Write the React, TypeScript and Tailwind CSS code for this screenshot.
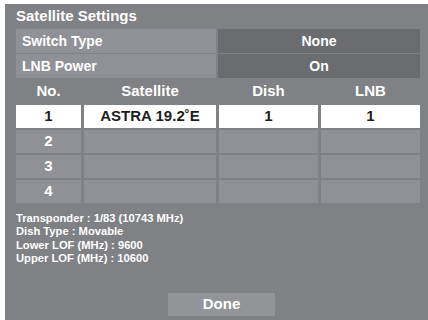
const rows = [
  { no: "1", sat: "ASTRA 19.2˚E", dish: "1", lnb: "1", active: true },
  { no: "2", sat: "", dish: "", lnb: "", active: false },
  { no: "3", sat: "", dish: "", lnb: "", active: false },
  { no: "4", sat: "", dish: "", lnb: "", active: false },
];

const info = [
  "Transponder : 1/83 (10743 MHz)",
  "Dish Type : Movable",
  "Lower LOF (MHz) : 9600",
  "Upper LOF (MHz) : 10600",
];

const App = () => {
  return (
    <div className="w-[428px] h-[320px] overflow-hidden bg-white pt-[4px] pl-[5px] font-['Liberation_Sans',Arial,sans-serif] font-bold">
      <div className="w-[423px] h-[316px] bg-[#808185] pl-[11px] flex flex-col text-white">

        {/* TITLE */}
        <div className="h-[25px] flex items-center text-[15px]">Satellite Settings</div>

        {/* SETTINGS */}
        <div className="w-[404px] flex flex-col gap-[1px] text-[14px]">
          <div className="h-[24px] flex gap-[2px]">
            <div className="w-[200px] bg-[#909196] flex items-center pl-[6px]">Switch Type</div>
            <div className="flex-1 bg-[#6b6c70] flex items-center justify-center">None</div>
          </div>
          <div className="h-[24px] flex gap-[2px]">
            <div className="w-[200px] bg-[#909196] flex items-center pl-[6px]">LNB Power</div>
            <div className="flex-1 bg-[#6b6c70] flex items-center justify-center">On</div>
          </div>
        </div>

        {/* TABLE */}
        <div className="w-[404px] grid grid-cols-[65px_132px_99px_99px] gap-x-[3px] text-[15px]">
          <div className="h-[27px] flex items-center justify-center">No.</div>
          <div className="h-[27px] flex items-center justify-center">Satellite</div>
          <div className="h-[27px] flex items-center justify-center">Dish</div>
          <div className="h-[27px] flex items-center justify-center">LNB</div>
        </div>
        <div className="w-[404px] flex flex-col gap-[2px] text-[15px]">
          {rows.map((r) => (
            <div
              key={r.no}
              className={
                r.active
                  ? "h-[23px] grid grid-cols-[65px_132px_99px_99px] gap-x-[3px] text-[#1e1e1e]"
                  : "h-[23px] grid grid-cols-[65px_132px_99px_99px] gap-x-[3px] text-white"
              }
            >
              {[r.no, r.sat, r.dish, r.lnb].map((v, i) => (
                <div
                  key={i}
                  className={
                    r.active
                      ? "bg-white flex items-center justify-center"
                      : "bg-[#909196] flex items-center justify-center"
                  }
                >
                  {v}
                </div>
              ))}
            </div>
          ))}
        </div>

        {/* INFO */}
        <div className="mt-[9px] text-[11.2px] leading-[13.3px]">
          {info.map((t) => (
            <div key={t}>{t}</div>
          ))}
        </div>

        {/* DONE */}
        <div className="mt-auto mb-[4px] pl-[152px] flex">
          <div className="w-[107px] h-[23px] bg-[#939498] flex items-center justify-center text-[15px]">Done</div>
        </div>
      </div>
    </div>
  );
};

export default App;
